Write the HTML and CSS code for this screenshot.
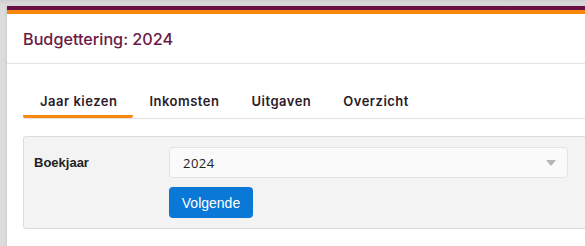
FILE: index.html
```html
<!DOCTYPE html>
<html lang="nl">
<head>
<meta charset="utf-8">
<title>Budgettering: 2024</title>
<link rel="stylesheet" href="styles.css">
</head>
<body>
<div class="page">
  <div class="card">
    <div class="card-header">
      <h1 class="title">Budgettering: 2024</h1>
    </div>
    <div class="card-body">
      <nav class="tabs">
        <a class="tab active">Jaar kiezen</a>
        <a class="tab">Inkomsten</a>
        <a class="tab">Uitgaven</a>
        <a class="tab">Overzicht</a>
      </nav>
      <div class="panel">
        <div class="form-row">
          <label class="label">Boekjaar</label>
          <div class="field">
            <div class="select">
              <span class="select-value">2024</span>
              <svg class="caret" width="10" height="6" viewBox="0 0 10 6"><path d="M0 0H10L5 6Z" fill="#b5b5b5"/></svg>
            </div>
            <button class="btn">Volgende</button>
          </div>
        </div>
      </div>
    </div>
  </div>
</div>
</body>
</html>
```
FILE: styles.css
```css
html, body {
  margin: 0;
  padding: 0;
}
body {
  background: linear-gradient(#cfcfcf, #dcdcdc 6px);
  background-color: #dcdcdc;
  overflow: hidden;
  height: 246px;
  font-family: Inter, "Noto Sans", sans-serif;
}
.page {
  padding: 6px 0 0 7px;
  height: 240px;
  overflow: hidden;
}
.card {
  background: #fff;
  border-top: 4px solid #6c0f44;
  box-shadow: -1px 0 2px rgba(0,0,0,0.08);
  height: 236px;
  margin-right: -40px;
}
.card::before {
  content: "";
  display: block;
  height: 4px;
  background: #f7890f;
}
.card-header {
  height: 49px;
  border-bottom: 1px solid #e2e2e2;
  display: flex;
  align-items: center;
  padding-left: 16px;
}
.title {
  margin: 0;
  font-size: 16.2px;
  font-weight: 500;
  color: #6a1a45;
}
.card-body {
  padding: 20px 0 0 16px;
}
.tabs {
  display: flex;
  border-bottom: 1px solid #e2e2e2;
}
.tab {
  padding: 9px 16px 6px;
  font-size: 13px;
  font-weight: 600;
  letter-spacing: 0.5px;
  color: #2b1a28;
  border-bottom: 3px solid transparent;
}
.tab.active {
  padding-left: 17px;
  border-bottom: 3px solid #f7890f;
  border-radius: 0 0 2px 2px;
}
.panel {
  margin-top: 17px;
  background: #f3f3f3;
  border: 1px solid #dcdcdc;
  border-radius: 3px;
  padding: 10px;
}
.form-row {
  display: flex;
}
.label {
  width: 135px;
  font-family: "Liberation Sans", Arial, sans-serif;
  font-weight: bold;
  font-size: 13px;
  color: #222;
  padding-top: 8px;
}
.field {
  display: flex;
  flex-direction: column;
  align-items: flex-start;
  gap: 9px;
}
.select {
  width: 399px;
  height: 31px;
  box-sizing: border-box;
  background: #fafafa;
  border: 1px solid #e3e3e3;
  border-radius: 4px;
  display: flex;
  align-items: center;
  justify-content: space-between;
  padding: 0 11px 0 13px;
}
.select-value {
  font-family: "Open Sans", sans-serif;
  font-size: 13px;
  letter-spacing: 0.5px;
  color: #222;
}
.btn {
  height: 31px;
  width: 84px;
  background: #0a78d6;
  color: #fff;
  border: none;
  border-radius: 4px;
  font-family: "Liberation Sans", Arial, sans-serif;
  font-size: 14px;
  padding: 0;
}
```
